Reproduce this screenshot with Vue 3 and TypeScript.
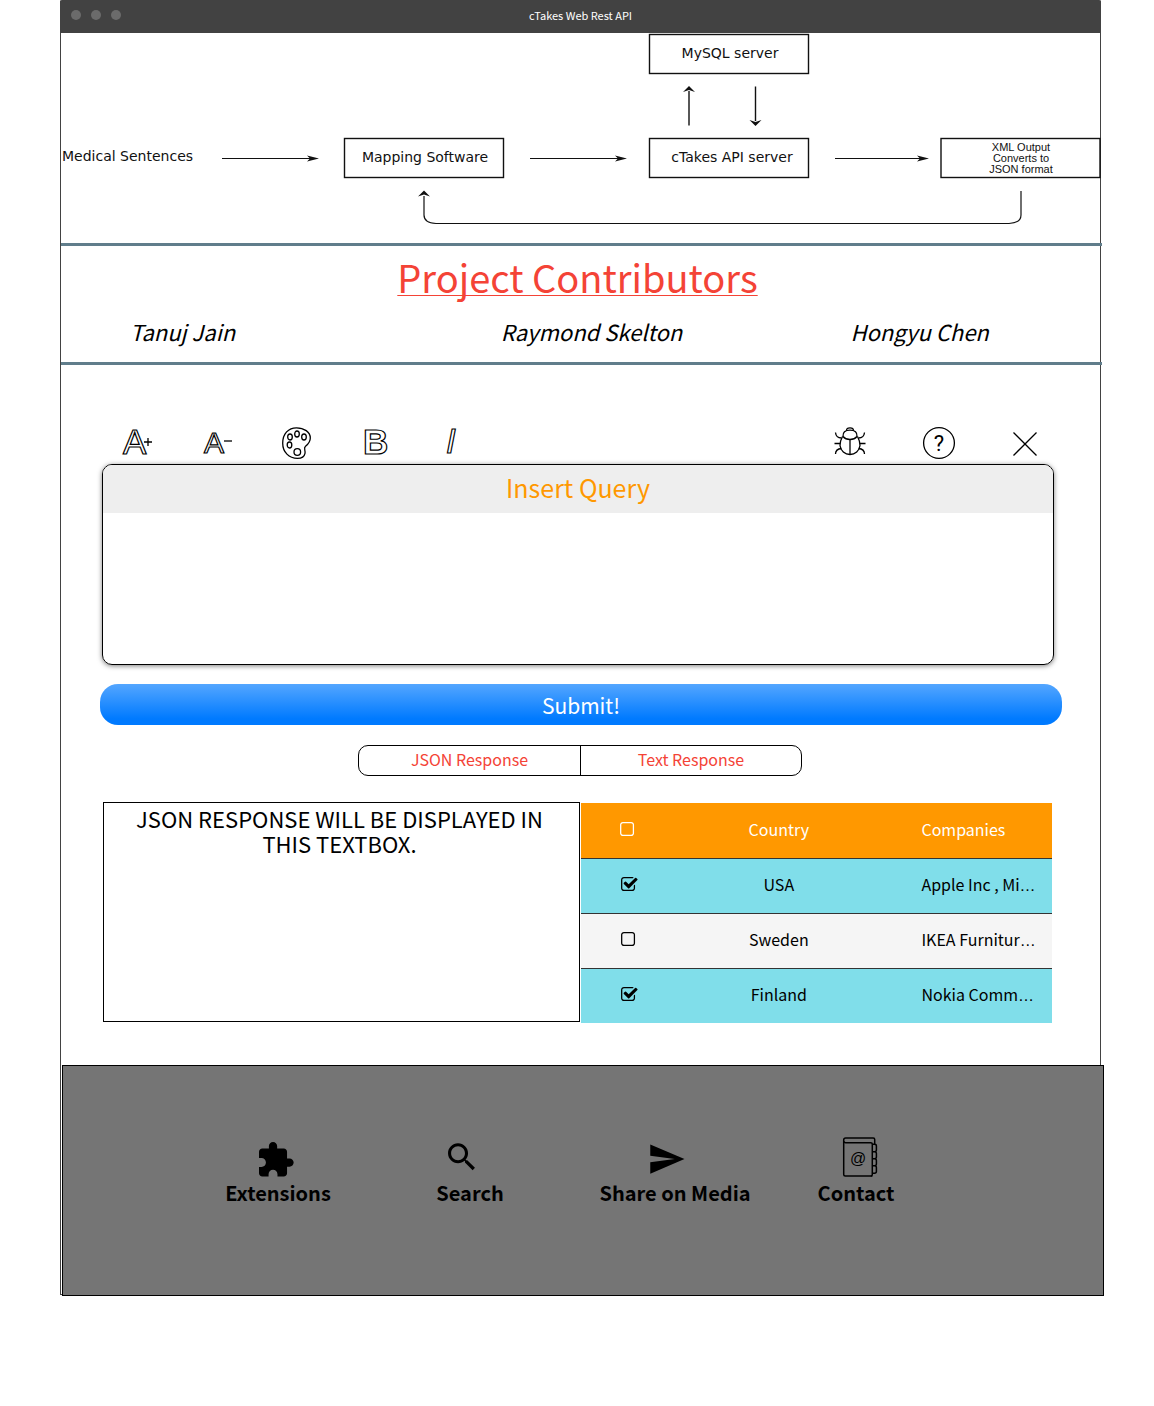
<script setup lang="ts">
import { ref } from 'vue'

interface Row {
  country: string
  companies: string
  checked: boolean
}

const query = ref('')
const response = ref('JSON RESPONSE WILL BE DISPLAYED IN THIS TEXTBOX.')
const allChecked = ref(false)
const rows = ref<Row[]>([
  { country: 'USA', companies: 'Apple Inc , Mi', checked: true },
  { country: 'Sweden', companies: 'IKEA Furnitur', checked: false },
  { country: 'Finland', companies: 'Nokia Comm', checked: true },
])

const boxPath =
  'M1120 1280h-832q-66 0-113-47t-47-113v-832q0-66 47-113t113-47h832q66 0 113 47t47 113v832q0 66-47 113t-113 47zM1408 1120v-832q0-119-84.5-203.5t-203.5-84.5h-832q-119 0-203.5 84.5t-84.5 203.5v832q0 119 84.5 203.5t203.5 84.5h832q119 0 203.5-84.5t84.5-203.5z'
const checkedPath =
  'M1408 606v-318q0-119-84.5-203.5t-203.5-84.5h-832q-119 0-203.5 84.5t-84.5 203.5v832q0 119 84.5 203.5t203.5 84.5h832q63 0 117-25q15-7 18-23q3-17-9-29l-49-49q-10-10-23-10q-3 0-9 2q-23 6-45 6h-832q-66 0-113-47t-47-113v-832q0-66 47-113t113-47h832q66 0 113 47t47 113v254q0 13 9 22l64 64q10 10 23 10q6 0 12-3q20-8 20-29zM1639 1095l-814-814q-24-24-57-24t-57 24l-430 430q-24 24-24 57t24 57l110 110q24 24 57 24t57-24l263-263l647 647q24 24 57 24t57-24l110-110q24-24 24-57t-24-57z'
</script>

<template>
  <div class="page">
    <div class="window">
      <header class="titlebar">
        <div class="dots"><span></span><span></span><span></span></div>
        <span class="title">cTakes Web Rest API</span>
      </header>

      <svg class="diagram" viewBox="0 0 1039 210" role="img" aria-label="Processing pipeline">
        <g fill="none" stroke="#111" stroke-width="1.4">
          <rect x="588.5" y="1.5" width="159" height="39" />
          <rect x="283.5" y="105.5" width="159" height="39" />
          <rect x="588.5" y="105.5" width="159" height="39" />
          <rect x="880" y="105.5" width="159" height="39" />
          <path d="M161 125.500h90M469 125.500h90M774 125.500h88" stroke-width="1" />
          <path d="M628 92.500V58M694.500 53.500V88" />
          <path d="M363 163V182q0 8 12 8.500H948q12-.5 12-8.500V158" stroke-width="1.200" />
        </g>
        <g fill="#111">
          <path d="M258 125.500l-12-3 3 3-3 3zM566 125.500l-12-3 3 3-3 3zM868 125.500l-12-3 3 3-3 3z" />
          <path d="M628 53l-6 6 6-2 6 2zM363 157.500l-6 6 6-2 6 2zM694.500 93l-6-6 6 2 6-2z" />
        </g>
        <g class="diagram-text">
          <text x="1" y="128">Medical Sentences</text>
          <text x="364" y="129" text-anchor="middle">Mapping Software</text>
          <text x="669" y="25" text-anchor="middle">MySQL server</text>
          <text x="671" y="129" text-anchor="middle">cTakes API server</text>
          <g class="small">
            <text x="960" y="118" text-anchor="middle">XML Output</text>
            <text x="960" y="129" text-anchor="middle">Converts to</text>
            <text x="960" y="140" text-anchor="middle">JSON format</text>
          </g>
        </g>
      </svg>

      <section class="contributors">
        <h1>Project Contributors</h1>
        <div class="names">
          <span>Tanuj Jain</span>
          <span>Raymond Skelton</span>
          <span>Hongyu Chen</span>
        </div>
      </section>

      <main>
        <div class="toolbar">
          <div class="tools">
            <button type="button" aria-label="Increase text size">
              <svg viewBox="0 0 32 32">
                <text class="glyph" x="1" y="27" font-size="35">A</text>
                <path d="M22 15h8M26 11v8" />
              </svg>
            </button>
            <button type="button" aria-label="Decrease text size">
              <svg viewBox="0 0 32 32">
                <text class="glyph" x="2" y="26" font-size="30">A</text>
                <path d="M22 14h8" />
              </svg>
            </button>
            <button type="button" aria-label="Text colour">
              <svg viewBox="0 0 32 32">
                <path d="M14.500.8C22 .8 28.300 5 28.300 11c0 4.600-2.400 6.300-4.800 8.200-2.300 1.900.2 4.300-.5 7.200-.6 3-3.300 5-7.500 5C7 31.400.7 25 .7 16.200.7 6.500 6.500.8 14.500.8z" />
                <ellipse cx="8" cy="10" rx="2.300" ry="3" />
                <ellipse cx="15" cy="7" rx="2.300" ry="3" />
                <ellipse cx="22" cy="10" rx="2.300" ry="3" />
                <ellipse cx="7.500" cy="18" rx="2.300" ry="3" />
                <circle cx="15.300" cy="25" r="3.300" />
              </svg>
            </button>
            <button type="button" aria-label="Bold">
              <svg viewBox="0 0 32 32">
                <text class="glyph" x="1" y="27" font-size="35" font-weight="700">B</text>
              </svg>
            </button>
            <button type="button" aria-label="Italic">
              <svg viewBox="0 0 32 32">
                <text class="glyph" x="4" y="26" font-size="35" font-style="italic">I</text>
              </svg>
            </button>
          </div>
          <div class="tools wide">
            <button type="button" aria-label="Report a bug">
              <svg viewBox="0 0 32 32">
                <path d="M12.500 3.500q0-2.700 3.500-2.700t3.500 2.700" />
                <path d="M9 9.500Q8.500 3.200 16 3.200t7 6.300q-2.500 3-7 3t-7-3z" />
                <path d="M8.500 9.500Q6 14 6 18.500C6.500 24 11 27.500 16 27.500S25.500 24 26 18.500Q26 14 23.500 9.500" />
                <path d="M16 12.500v15M.5 16.500h5.500M26 16.500h5.500M1.500 5.500q.5 5.500 6 5.500M30.500 5.500q-.5 5.500-6 5.500M7.500 21.500q-6 .5-6 5.500M24.500 21.500q6 .5 6 5.500" />
              </svg>
            </button>
            <button type="button" aria-label="Help">
              <svg viewBox="0 0 32 32">
                <circle cx="16" cy="16" r="15.400" />
                <text class="mark" x="16" y="24" text-anchor="middle" font-size="22">?</text>
              </svg>
            </button>
            <button type="button" aria-label="Close">
              <svg viewBox="0 0 32 32"><path d="M1.500 5.500l23 23M24.500 5.500l-23 23" /></svg>
            </button>
          </div>
        </div>

        <div class="query">
          <label for="query">Insert Query</label>
          <textarea id="query" v-model="query"></textarea>
        </div>

        <button class="submit" type="button">Submit!</button>

        <div class="switch">
          <div class="segments">
            <button type="button">JSON Response</button>
            <button type="button">Text Response</button>
          </div>
        </div>

        <div class="results">
          <textarea v-model="response" class="response" aria-label="JSON response" readonly></textarea>
          <table>
            <thead>
              <tr>
                <th>
                  <label class="tick">
                    <input v-model="allChecked" type="checkbox" aria-label="Select all" />
                    <svg viewBox="0 0 1700 1408"><path transform="matrix(1 0 0 -1 0 1408)" :d="allChecked ? checkedPath : boxPath" /></svg>
                  </label>
                </th>
                <th>Country</th>
                <th class="companies">Companies</th>
              </tr>
            </thead>
            <tbody>
              <tr v-for="row in rows" :key="row.country" :class="{ selected: row.checked }">
                <td>
                  <label class="tick">
                    <input v-model="row.checked" type="checkbox" :aria-label="row.country" />
                    <svg viewBox="0 0 1700 1408"><path transform="matrix(1 0 0 -1 0 1408)" :d="row.checked ? checkedPath : boxPath" /></svg>
                  </label>
                </td>
                <td>{{ row.country }}</td>
                <td class="companies">{{ row.companies }}<span class="more">…</span></td>
              </tr>
            </tbody>
          </table>
        </div>
      </main>

      <footer>
        <a href="#extensions">
          <svg viewBox="0 0 56 44">
            <path transform="translate(5.700 5.300) scale(1.650)" d="M20.500 11H19V7c0-1.100-.9-2-2-2h-4V3.500C13 2.120 11.880 1 10.500 1S8 2.120 8 3.500V5H4c-1.100 0-1.990.9-1.990 2v3.800H3.500c1.490 0 2.700 1.210 2.700 2.700s-1.210 2.700-2.700 2.700H2V20c0 1.100.9 2 2 2h3.800v-1.500c0-1.490 1.210-2.700 2.700-2.700 1.490 0 2.700 1.210 2.700 2.700V22H17c1.100 0 2-.9 2-2v-4h1.500c1.380 0 2.500-1.120 2.500-2.500S21.880 11 20.500 11z" />
          </svg>
          <span>Extensions</span>
        </a>
        <a href="#search">
          <svg viewBox="0 0 56 44">
            <path transform="translate(1.400 3.600) scale(1.540)" d="M15.500 14h-.79l-.28-.27C15.410 12.590 16 11.110 16 9.500 16 5.910 13.090 3 9.500 3S3 5.910 3 9.500 5.910 16 9.500 16c1.610 0 3.090-.59 4.230-1.570l.27.28v.79l5 4.990L20.490 19l-4.990-5zm-6 0C7.010 14 5 11.990 5 9.500S7.010 5 9.500 5 14 7.010 14 9.500 11.990 14 9.500 14z" />
          </svg>
          <span>Search</span>
        </a>
        <a href="#share">
          <svg viewBox="0 0 56 44">
            <path transform="translate(0 4.500) scale(1.630)" d="M2.010 21L23 12 2.010 3 2 10l15 2-15 2z" />
          </svg>
          <span>Share on Media</span>
        </a>
        <a href="#contact">
          <svg viewBox="0 0 56 44">
            <g fill="none" stroke="#000" stroke-width="1.500">
              <path d="M44.300 41H17.200q-1.500 0-1.500-1.500V5q0-2 2-2h27.500q1.500 0 1.500 1.500V9" />
              <path d="M15.700 6q0 1.700 2 1.700h25.100q1.500 0 1.500 1.500V39.500q0 1.500-1.500 1.500" />
              <path d="M44.300 9.300h2.200q1.900 0 1.900 1.700v4q0 1.700-1.900 1.700h-2.200M44.300 16.700h2.200q1.900 0 1.900 1.700v3.600q0 1.700-1.900 1.700h-2.200M44.300 23.700h2.200q1.900 0 1.900 1.700v3.600q0 1.700-1.900 1.700h-2.200M44.300 30.700h2.200q1.900 0 1.900 1.700v4.200q0 1.700-1.900 1.700h-2.200" />
            </g>
            <text x="30" y="29" text-anchor="middle" font-size="16">@</text>
          </svg>
          <span>Contact</span>
        </a>
      </footer>
    </div>
  </div>
</template>

<style>
body {
  margin: 0;
  background: #fff;
}
</style>

<style scoped>
* {
  box-sizing: border-box;
}

.page {
  min-height: 100vh;
  padding: 0 53px 8px 60px;
}

.window {
  border: 1px solid #424242;
  border-top: 0;
  border-radius: 2px 2px 0 0;
  color: #000;
  font-family: 'Noto Sans CJK SC', 'Noto Sans', sans-serif;
}

button,
textarea {
  padding: 0;
  border: 0;
  background: none;
  color: inherit;
  font: inherit;
}

.titlebar {
  display: grid;
  grid-template-columns: 1fr auto 1fr;
  margin: 0 -1px;
  height: 33px;
  border-radius: 2px 2px 0 0;
  background: #424242;
  color: #fff;
}

.dots {
  display: flex;
  gap: 10px;
  padding: 10px 0 0 11px;
}

.dots span {
  width: 10px;
  height: 10px;
  border-radius: 50%;
  background: #6b6b6b;
}

.title {
  font-size: 11px;
  line-height: 31px;
}

.diagram {
  display: block;
  width: 100%;
  overflow: visible;
}

.diagram-text {
  fill: #111;
  font: 14px 'DejaVu Sans', sans-serif;
}

.diagram-text .small {
  font-family: 'Liberation Sans', sans-serif;
  font-size: 11px;
}

.contributors {
  margin-right: -2px;
  padding-bottom: 8px;
  border-top: 3px solid #607d8b;
  border-bottom: 3px solid #607d8b;
}

h1 {
  margin: 0;
  padding-right: 8px;
  color: #f44336;
  font-size: 38px;
  font-weight: 400;
  line-height: 62px;
  text-align: center;
  text-decoration: underline 1px;
  text-decoration-skip-ink: none;
  text-underline-offset: 2px;
}

.names {
  display: grid;
  grid-template-columns: 370fr 349fr 251fr;
  padding-left: 69px;
  font-size: 22px;
  font-style: italic;
  line-height: 46px;
}

main {
  padding: 62px 46px 42px 41px;
}

.toolbar {
  display: flex;
  justify-content: space-between;
  padding: 0 10px 5px 20px;
}

.tools {
  display: flex;
  gap: 48px;
}

.tools.wide {
  gap: 57px;
}

.tools button,
.tools svg {
  display: block;
  width: 32px;
  height: 32px;
}

.tools svg {
  overflow: visible;
  fill: none;
  stroke: #000;
  stroke-width: 1.3;
}

.tools .glyph {
  font-family: 'Liberation Sans', sans-serif;
  stroke-width: 1.2;
}

.tools .mark {
  fill: #000;
  stroke: none;
  font-family: Roboto, sans-serif;
}

.query {
  display: flex;
  flex-direction: column;
  min-height: 201px;
  overflow: hidden;
  border: 1px solid #000;
  border-radius: 10px;
  box-shadow: 0 1px 5px rgba(0, 0, 0, 0.5);
}

.query label {
  padding-bottom: 4px;
  background: #eee;
  color: #ff9800;
  font-size: 25px;
  line-height: 44px;
  text-align: center;
}

.query textarea {
  flex: 1;
  padding: 8px;
  outline: 0;
  resize: none;
}

.submit {
  display: block;
  width: calc(100% + 10px);
  height: 41px;
  margin: 19px -8px 20px -2px;
  border-radius: 18px;
  background: linear-gradient(#54a6ff, #007aff 85%);
  color: #fff;
  font-size: 21px;
}

.switch {
  display: flex;
  justify-content: center;
  padding: 0 0 26px 4px;
}

.segments {
  display: grid;
  grid-template-columns: 1fr 1fr;
  width: 444px;
  height: 31px;
  border: 1px solid #000;
  border-radius: 10px;
  color: #f44336;
  font-size: 16px;
  line-height: 24px;
}

.segments button {
  padding-bottom: 3px;
}

.segments button + button {
  border-left: 1px solid #000;
}

.results {
  display: grid;
  grid-template-columns: 477fr 472fr;
  padding: 0 2px 0 1px;
}

.response {
  display: block;
  margin-bottom: 1px;
  padding: 3px 22px 3px 18px;
  border: 1px solid #000;
  outline: 0;
  font-size: 22px;
  line-height: 25px;
  text-align: center;
  resize: none;
}

table {
  margin: 1px 0 0 1px;
  border-collapse: collapse;
  table-layout: fixed;
  font-size: 16px;
  line-height: 24px;
}

th,
td {
  height: 55px;
  padding: 0 0 3px;
  font-weight: 400;
  text-align: center;
}

th:first-child {
  width: 20%;
}

th:nth-child(2) {
  width: 44%;
}

.companies {
  padding-left: 39px;
  text-align: left;
  white-space: nowrap;
}

.more {
  font-family: 'Liberation Sans', sans-serif;
  line-height: 16px;
}

thead {
  background: #ff9800;
  color: #fff;
}

tbody tr {
  border-top: 1px solid #333;
  background: #f5f5f5;
}

tbody .selected {
  background: #80deea;
}

.tick {
  display: grid;
  justify-content: center;
}

tbody .tick {
  padding-left: 2px;
}

.tick input,
.tick svg {
  grid-area: 1 / 1;
  width: 17px;
  height: 14px;
  margin: 0;
}

.tick input {
  opacity: 0;
}

.tick svg {
  fill: currentColor;
  pointer-events: none;
}

footer {
  display: grid;
  grid-template-columns: 192fr 192fr 218fr 144fr;
  align-items: start;
  min-height: 231px;
  margin: 0 -4px -2px 1px;
  padding: 69px 175px 60px 119px;
  border: 1px solid #000;
  background: #757575;
}

footer a {
  display: flex;
  flex-direction: column;
  align-items: center;
  color: #000;
  font-size: 20px;
  font-weight: 700;
  line-height: 28px;
  text-decoration: none;
  white-space: nowrap;
}

footer svg {
  width: 56px;
  height: 44px;
}

footer text {
  font-family: 'Liberation Sans', sans-serif;
  font-weight: 400;
}
</style>
